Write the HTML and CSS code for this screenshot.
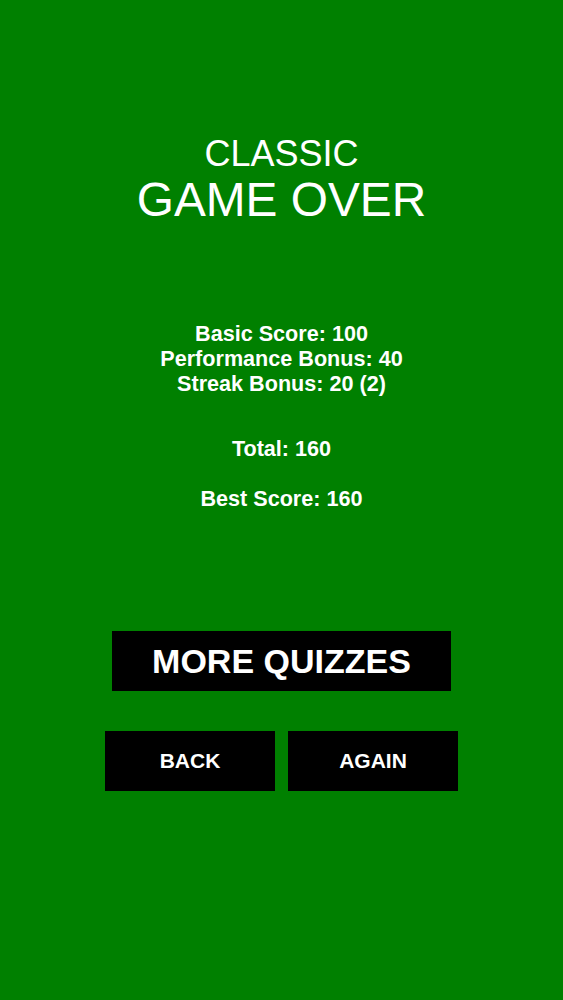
FILE: index.html
```html
<!DOCTYPE html>
<html lang="en">
<head>
<meta charset="utf-8">
<title>Game Over</title>
<link rel="stylesheet" href="styles.css">
</head>
<body>
<main class="screen">
  <header class="title">
    <div class="mode">CLASSIC</div>
    <h1 class="heading">GAME OVER</h1>
  </header>
  <section class="scores">
    <div class="line">Basic Score: 100</div>
    <div class="line">Performance Bonus: 40</div>
    <div class="line">Streak Bonus: 20 (2)</div>
    <div class="line total">Total: 160</div>
    <div class="line best">Best Score: 160</div>
  </section>
  <nav class="actions">
    <button class="btn btn-more">MORE QUIZZES</button>
    <div class="row">
      <button class="btn btn-small">BACK</button>
      <button class="btn btn-small">AGAIN</button>
    </div>
  </nav>
</main>
</body>
</html>
```

FILE: styles.css
```css
html, body {
  margin: 0;
  padding: 0;
}
body {
  background: #008000;
  color: #ffffff;
  font-family: "Liberation Sans", Arial, sans-serif;
  min-height: 1000px;
}
.screen {
  padding-top: 134px;
  display: flex;
  flex-direction: column;
  align-items: center;
}
.title {
  text-align: center;
}
.mode {
  font-size: 36px;
  line-height: 40px;
  font-weight: normal;
}
.heading {
  margin: 0;
  font-size: 47.8px;
  line-height: 52px;
  font-weight: normal;
}
.scores {
  margin-top: 95px;
  text-align: center;
  font-weight: bold;
  font-size: 21.6px;
  line-height: 25px;
}
.total {
  margin-top: 40px;
}
.best {
  margin-top: 25px;
}
.actions {
  margin-top: 120px;
  display: flex;
  flex-direction: column;
  align-items: center;
}
.btn {
  background: #000000;
  color: #ffffff;
  border: 0;
  padding: 0;
  margin: 0;
  font-family: "Liberation Sans", Arial, sans-serif;
  font-weight: bold;
  display: flex;
  align-items: center;
  justify-content: center;
  height: 60px;
}
.btn-more {
  width: 339px;
  font-size: 34px;
}
.row {
  margin-top: 40px;
  display: flex;
  gap: 13px;
}
.btn-small {
  width: 170px;
  font-size: 21px;
}
```
